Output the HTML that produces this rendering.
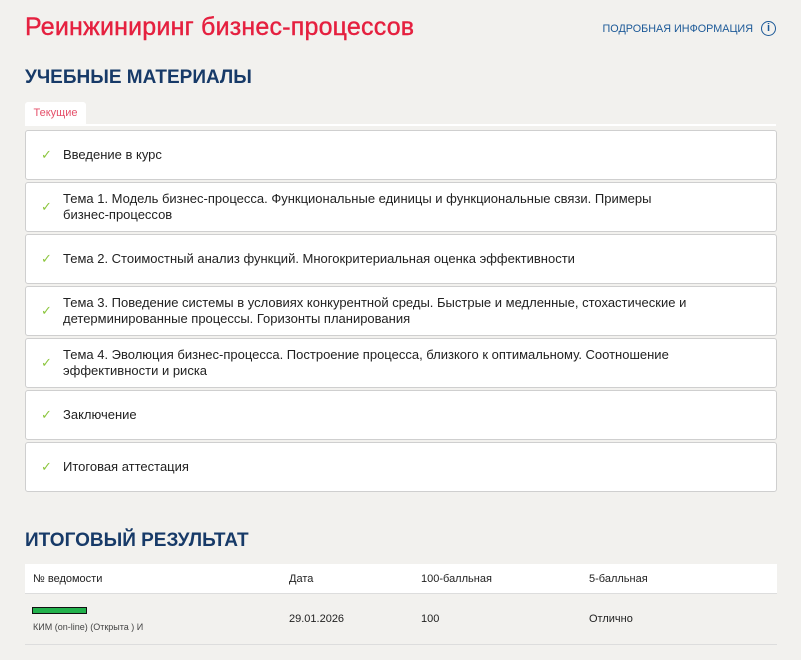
<!DOCTYPE html>
<html><head><meta charset="utf-8"><style>
body{margin:0;background:#f2f1ee;font-family:"Liberation Sans","DejaVu Sans",sans-serif;width:801px;height:660px;overflow:hidden;position:relative}
.a{position:absolute}
h1{position:absolute;left:25px;top:13px;margin:0;font-size:25px;font-weight:normal;color:#e5203f;letter-spacing:0.2px;-webkit-text-stroke:0.4px #e5203f}
.info{right:48px;top:23px;font-size:10.8px;color:#1d5a98}
.icon{left:761px;top:21px;width:13px;height:13px;border:1.6px solid #1d5a98;border-radius:50%;color:#1d5a98;font-size:11px;font-weight:bold;text-align:center;line-height:13px}
h2{position:absolute;left:25px;margin:0;font-size:19px;font-weight:bold;color:#173a68}
.tab{left:25px;top:102px;width:61px;height:23px;background:#fff;border-radius:3px 3px 0 0;color:#e5506a;font-size:11px;text-align:center;line-height:23px}
.line{left:25px;top:124px;width:751px;height:2px;background:#fff}
.it{position:absolute;left:25px;width:750px;height:48px;background:#fff;border:1px solid #cfcfcf;border-radius:3px}
.it .c{position:absolute;left:15px;top:50%;margin-top:-8px;color:#8cc63e;font-size:13px}
.it .t{position:absolute;left:37px;top:50%;transform:translateY(-50%);font-size:13px;color:#222;line-height:16px;width:650px}
.nw{white-space:nowrap}
.th{left:25px;top:564px;width:752px;height:29px;background:#fff;border-bottom:1px solid #ddd}
.tx{font-size:11px;color:#222}
</style></head><body>
<h1>Реинжиниринг бизнес-процессов</h1>
<div class="a info">ПОДРОБНАЯ ИНФОРМАЦИЯ</div>
<div class="a icon">i</div>
<h2 style="top:67px">УЧЕБНЫЕ МАТЕРИАЛЫ</h2>
<div class="a tab">Текущие</div>
<div class="a line"></div>
<div class="it" style="top:130px"><span class="c">✓</span><span class="t">Введение в курс</span></div>
<div class="it" style="top:182px"><span class="c">✓</span><span class="t">Тема 1. Модель бизнес-процесса. Функциональные единицы и функциональные связи. Примеры <span class="nw">бизнес-процессов</span></span></div>
<div class="it" style="top:234px"><span class="c">✓</span><span class="t">Тема 2. Стоимостный анализ функций. Многокритериальная оценка эффективности</span></div>
<div class="it" style="top:286px"><span class="c">✓</span><span class="t">Тема 3. Поведение системы в условиях конкурентной среды. Быстрые и медленные, стохастические и детерминированные процессы. Горизонты планирования</span></div>
<div class="it" style="top:338px"><span class="c">✓</span><span class="t">Тема 4. Эволюция бизнес-процесса. Построение процесса, близкого к оптимальному. Соотношение эффективности и риска</span></div>
<div class="it" style="top:390px"><span class="c">✓</span><span class="t">Заключение</span></div>
<div class="it" style="top:442px"><span class="c">✓</span><span class="t">Итоговая аттестация</span></div>
<h2 style="top:530px">ИТОГОВЫЙ РЕЗУЛЬТАТ</h2>
<div class="a th"></div>
<div class="a tx" style="left:33px;top:573px">№ ведомости</div>
<div class="a tx" style="left:289px;top:573px">Дата</div>
<div class="a tx" style="left:421px;top:573px">100-балльная</div>
<div class="a tx" style="left:589px;top:573px">5-балльная</div>
<div class="a" style="left:32px;top:607px;width:53px;height:5px;background:#22b14c;border:1px solid #111"></div>
<div class="a" style="left:33px;top:622px;font-size:9px;color:#444">КИМ (on-line) (Открыта ) И</div>
<div class="a tx" style="left:289px;top:613px">29.01.2026</div>
<div class="a tx" style="left:421px;top:613px">100</div>
<div class="a tx" style="left:589px;top:613px">Отлично</div>
<div class="a" style="left:25px;top:644px;width:752px;height:1px;background:#ddd"></div>
</body></html>
